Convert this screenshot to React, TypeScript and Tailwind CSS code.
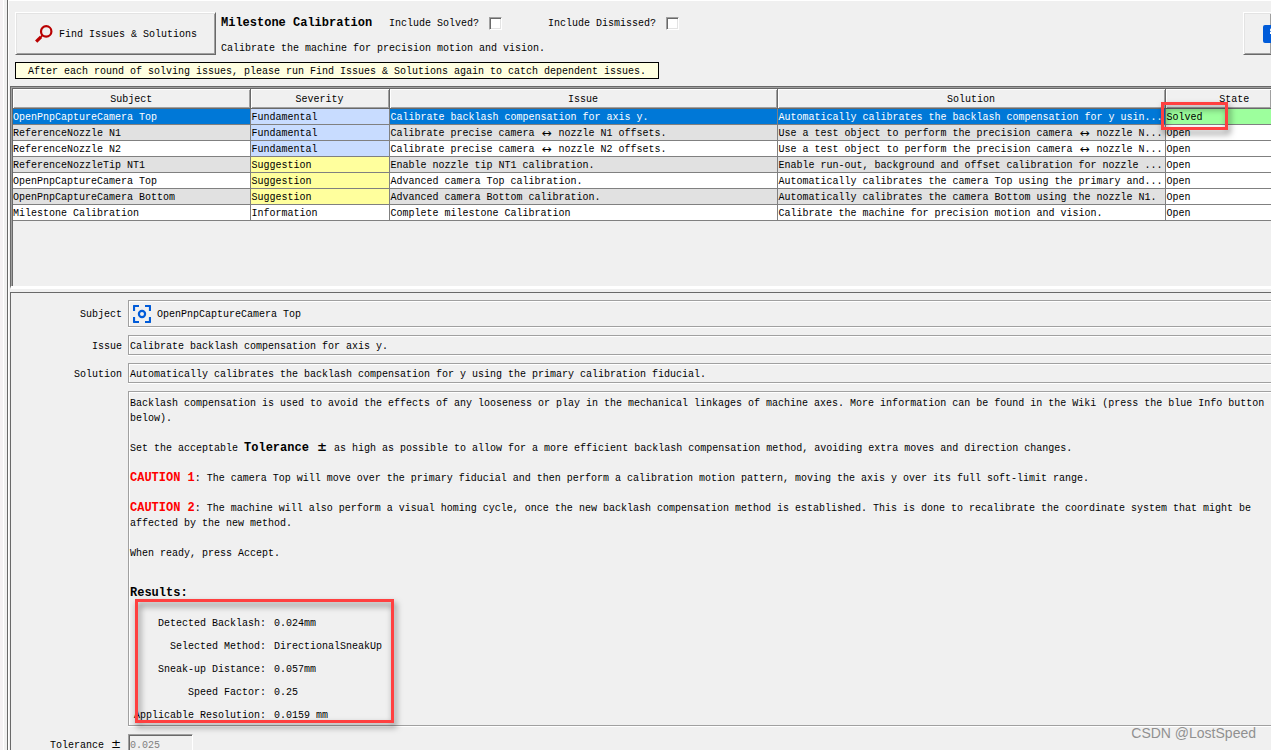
import React from 'react';

interface IssueRow {
  subject: string;
  severity: 'Fundamental' | 'Suggestion' | 'Information';
  issue: string;
  solution: string;
  state: 'Open' | 'Solved';
}

const ISSUES: IssueRow[] = [
  {
    subject: 'OpenPnpCaptureCamera Top',
    severity: 'Fundamental',
    issue: 'Calibrate backlash compensation for axis y.',
    solution: 'Automatically calibrates the backlash compensation for y usin...',
    state: 'Solved',
  },
  {
    subject: 'ReferenceNozzle N1',
    severity: 'Fundamental',
    issue: 'Calibrate precise camera ↔ nozzle N1 offsets.',
    solution: 'Use a test object to perform the precision camera ↔ nozzle N...',
    state: 'Open',
  },
  {
    subject: 'ReferenceNozzle N2',
    severity: 'Fundamental',
    issue: 'Calibrate precise camera ↔ nozzle N2 offsets.',
    solution: 'Use a test object to perform the precision camera ↔ nozzle N...',
    state: 'Open',
  },
  {
    subject: 'ReferenceNozzleTip NT1',
    severity: 'Suggestion',
    issue: 'Enable nozzle tip NT1 calibration.',
    solution: 'Enable run-out, background and offset calibration for nozzle ...',
    state: 'Open',
  },
  {
    subject: 'OpenPnpCaptureCamera Top',
    severity: 'Suggestion',
    issue: 'Advanced camera Top calibration.',
    solution: 'Automatically calibrates the camera Top using the primary and...',
    state: 'Open',
  },
  {
    subject: 'OpenPnpCaptureCamera Bottom',
    severity: 'Suggestion',
    issue: 'Advanced camera Bottom calibration.',
    solution: 'Automatically calibrates the camera Bottom using the nozzle N1.',
    state: 'Open',
  },
  {
    subject: 'Milestone Calibration',
    severity: 'Information',
    issue: 'Complete milestone Calibration',
    solution: 'Calibrate the machine for precision motion and vision.',
    state: 'Open',
  },
];

const RESULTS = [
  ['Detected Backlash:', '0.024mm'],
  ['Selected Method:', 'DirectionalSneakUp'],
  ['Sneak-up Distance:', '0.057mm'],
  ['Speed Factor:', '0.25'],
  ['Applicable Resolution:', '0.0159 mm'],
];

const COLUMNS = ['Subject', 'Severity', 'Issue', 'Solution', 'State'];

const severityClass = {
  Fundamental: 'bg-[#c8dcff]',
  Suggestion: 'bg-[#ffff9d]',
  Information: 'bg-white',
};

const raised =
  'border border-t-white border-l-white border-b-[#696969] shadow-[inset_1px_1px_0_#e3e3e3,inset_-1px_-1px_0_#a0a0a0]';

const etched = 'border border-r-0 border-[#a0a0a0] shadow-[inset_1px_1px_0_#ffffff,0_1px_0_#ffffff]';

const marker = 'absolute border-[3px] border-[#ff4040] drop-shadow-[2px_4px_3px_rgba(0,0,0,0.5)]';

const SearchIcon = () => (
  <svg width="18" height="18" viewBox="0 0 18 18" fill="none" stroke="#b90000" aria-hidden="true">
    <circle cx="11.2" cy="6.4" r="5.2" strokeWidth="2.2" />
    <path d="M7.6 10.2 L5.8 12" strokeWidth="1.8" />
    <path d="M6 11.8 L1.2 16.6" strokeWidth="3.2" />
  </svg>
);

const CameraIcon = () => (
  <svg
    width="18"
    height="18"
    viewBox="0 0 18 18"
    fill="none"
    stroke="#005bd9"
    strokeWidth="2.2"
    strokeLinejoin="round"
    aria-hidden="true"
  >
    <path d="M1 6V1H6M12 1H17V6M17 12V17H12M6 17H1V12" />
    <circle cx="9" cy="9" r="3.1" />
  </svg>
);

const InfoIcon = () => (
  <svg width="18" height="18" viewBox="0 0 18 18" aria-hidden="true">
    <rect width="18" height="18" rx="2" fill="#005bd9" />
    <circle cx="9" cy="5" r="2" fill="white" />
    <path d="M7 8H10V15" fill="none" stroke="white" strokeWidth="2" />
  </svg>
);

// symbols that take two character cells
const Wide: React.FC<{ children: React.ReactNode }> = ({ children }) => (
  <span className="inline-block w-3 text-center align-top font-['DejaVu_Sans',sans-serif] text-[12px] leading-[13px]">
    {children}
  </span>
);

const withArrow = (text: string) => {
  const [before, after] = text.split('↔');
  if (after === undefined) return text;
  return (
    <>
      {before}
      <Wide>↔</Wide>
      {after}
    </>
  );
};

const CheckOption: React.FC<{ label: string }> = ({ label }) => (
  <label className="flex items-center gap-[10px]">
    {label}
    <input
      type="checkbox"
      className="h-[13px] w-[13px] appearance-none border border-t-[#a0a0a0] border-l-[#a0a0a0] border-r-white border-b-white bg-white shadow-[inset_1px_1px_0_#696969,inset_-1px_-1px_0_#e3e3e3]"
    />
  </label>
);

const Toolbar = () => (
  <header className="mt-[11px] flex h-[46px] items-start pl-[7px]">
    <button
      className={`flex h-[43px] w-[201px] shrink-0 items-center gap-[6px] border-r-[#696969] pl-[19px] ${raised}`}
    >
      <SearchIcon />
      <span className="pt-[2px]">Find Issues &amp; Solutions</span>
    </button>
    <div className="ml-[5px] flex flex-col gap-[10px] pt-[3px]">
      <div className="flex h-4 items-center">
        <h1 className="w-[168px] text-[12px] font-bold">Milestone Calibration</h1>
        <div className="flex gap-[46px]">
          <CheckOption label="Include Solved?" />
          <CheckOption label="Include Dismissed?" />
        </div>
      </div>
      <p>Calibrate the machine for precision motion and vision.</p>
    </div>
    <button
      aria-label="Info"
      className={`ml-auto flex h-[43px] w-7 items-center overflow-hidden border-r-0 pl-[19px] ${raised}`}
    >
      <span className="shrink-0">
        <InfoIcon />
      </span>
    </button>
  </header>
);

const IssueTable = () => (
  <section className="mt-[7px] ml-[2px] h-[203px] border-t border-b-[3px] border-l border-t-[#696969] border-b-white border-l-[#696969]">
    <div className="h-full border-t border-l border-[#a0a0a0]">
      <div className="h-full border-t border-l border-[#696969]">
        <table className="w-full table-fixed border-collapse">
          <colgroup>
            <col className="w-[237px]" />
            <col className="w-[139px]" />
            <col className="w-[388px]" />
            <col className="w-[388px]" />
            <col />
          </colgroup>
          <thead>
            <tr className="h-[19px]">
              {COLUMNS.map((column) => (
                <th
                  key={column}
                  className="border-r border-b border-[#696969] p-0 pt-[2px] text-center leading-[15px] font-normal shadow-[inset_1px_1px_0_#ffffff,inset_-1px_-1px_0_#a0a0a0] last:border-r-0 last:pl-8"
                >
                  {column}
                </th>
              ))}
            </tr>
          </thead>
          <tbody>
            {ISSUES.map((row, index) => {
              const selected = index === 0;
              const base = selected ? 'bg-[#0078d7] text-white' : index % 2 ? 'bg-[#e1e1e1]' : 'bg-white';
              const cell =
                'overflow-hidden whitespace-nowrap border-r border-b border-[#808080] p-0 pt-[2px] pl-px leading-[13px] first:pl-0 last:border-r-0';
              return (
                <tr key={index} className="h-4">
                  <td className={`${cell} ${base}`}>{row.subject}</td>
                  <td className={`${cell} ${severityClass[row.severity]}`}>{row.severity}</td>
                  <td className={`${cell} ${base}`}>{withArrow(row.issue)}</td>
                  <td className={`${cell} ${base}`}>{withArrow(row.solution)}</td>
                  <td className={`${cell} ${row.state === 'Solved' ? 'bg-[#9dff9d]' : 'bg-white'}`}>{row.state}</td>
                </tr>
              );
            })}
          </tbody>
        </table>
      </div>
    </div>
  </section>
);

const Field: React.FC<{ label: string; children: React.ReactNode }> = ({ label, children }) => (
  <div className="flex items-center">
    <span className="w-[111px] shrink-0 pt-[2px] text-right">{label}</span>
    <div className="ml-[6px] min-w-0 flex-1">{children}</div>
  </div>
);

const Description = () => (
  <article className={`h-[335px] pt-1 pl-px leading-[15px] ${etched}`}>
    <p>
      Backlash compensation is used to avoid the effects of any looseness or play in the mechanical linkages of
      machine axes. More information can be found in the Wiki (press the blue Info button below).
    </p>
    <p className="mt-[15px]">
      Set the acceptable{' '}
      <b className="text-[12px]">
        Tolerance <Wide>±</Wide>
      </b>{' '}
      as high as possible to allow for a more efficient backlash compensation method, avoiding extra moves and
      direction changes.
    </p>
    <p className="mt-[15px]">
      <b className="text-[12px] text-[#ff0000]">CAUTION 1</b>: The camera Top will move over the primary fiducial and
      then perform a calibration motion pattern, moving the axis y over its full soft-limit range.
    </p>
    <p className="mt-[15px]">
      <b className="text-[12px] text-[#ff0000]">CAUTION 2</b>: The machine will also perform a visual homing cycle,
      once the new backlash compensation method is established. This is done to recalibrate the coordinate system that
      might be affected by the new method.
    </p>
    <p className="mt-[15px]">When ready, press Accept.</p>
    <h2 className="mt-[25px] text-[12px] font-bold">Results:</h2>
    <div className="relative">
      <dl className="grid grid-cols-[136px_1fr] gap-x-2 gap-y-2 pt-[15px]">
        {RESULTS.map(([name, value]) => (
          <React.Fragment key={name}>
            <dt className="text-right">{name}</dt>
            <dd>{value}</dd>
          </React.Fragment>
        ))}
      </dl>
      <div className={`-top-[2px] left-[5px] h-[124px] w-[259px] ${marker}`} />
    </div>
  </article>
);

export default function App() {
  return (
    <main className="relative flex h-screen overflow-hidden bg-[#f0f0f0] font-['Liberation_Mono',monospace] text-[10px] leading-[15px] text-black">
      <div className="w-1 shrink-0 border-r border-white bg-[#f5f2f4]" />
      <div className="w-1 shrink-0 border-r border-[#696969] shadow-[1px_0_0_#ffffff]" />
      <div className="min-w-0 flex-1 border-t border-white">
        <Toolbar />
        <p className="mt-1 ml-[7px] h-[17px] w-[644px] border border-black bg-[#ffffe1] pt-px pl-3">
          After each round of solving issues, please run Find Issues &amp; Solutions again to catch dependent issues.
        </p>
        <IssueTable />
        <section className="mt-[3px] ml-[2px] border-t border-l border-[#696969] pt-[7px]">
          <div className="flex flex-col gap-2">
            <Field label="Subject">
              <div className={`flex h-[27px] items-center gap-[6px] pl-1 ${etched}`}>
                <CameraIcon />
                <span className="pt-[2px]">OpenPnpCaptureCamera Top</span>
              </div>
            </Field>
            <Field label="Issue">
              <div className={`flex h-5 items-center pt-[2px] pl-px ${etched}`}>
                Calibrate backlash compensation for axis y.
              </div>
            </Field>
            <Field label="Solution">
              <div className={`flex h-5 items-center pt-[2px] pl-px ${etched}`}>
                Automatically calibrates the backlash compensation for y using the primary calibration fiducial.
              </div>
            </Field>
            <Field label="">
              <Description />
            </Field>
            <div className="flex items-center">
              <label htmlFor="tolerance" className="w-[111px] pt-[2px] text-right">
                Tolerance <Wide>±</Wide>
              </label>
              <input
                id="tolerance"
                disabled
                defaultValue="0.025"
                className="ml-[6px] h-5 w-[65px] border border-t-[#a0a0a0] border-r-white border-b-white border-l-[#a0a0a0] pt-[2px] pl-px text-[#808080] shadow-[inset_1px_1px_0_#696969]"
              />
            </div>
          </div>
        </section>
      </div>
      <div className={`top-[102px] left-[1161px] h-7 w-[67px] ${marker}`} />
      <div className="absolute right-[15px] bottom-[7px] font-['Liberation_Sans',sans-serif] text-[14px] leading-5 text-[#909090]">
        CSDN @LostSpeed
      </div>
    </main>
  );
}
